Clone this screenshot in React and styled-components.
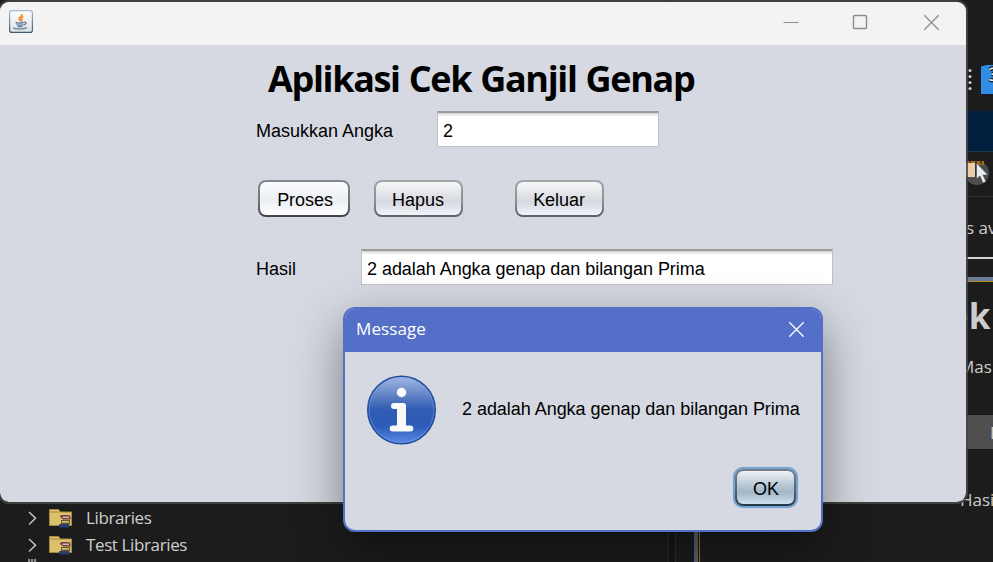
import React from "react";
import styled, { createGlobalStyle } from "styled-components";

const Global = createGlobalStyle`
  * { box-sizing: border-box; }
  html, body { margin: 0; padding: 0; overflow: hidden; background: #1c1c1c; }
`;

const ui = `"Open Sans", "Noto Sans", sans-serif`;
const swing = `"Liberation Sans", Arial, sans-serif`;

const Desktop = styled.div`
  position: relative;
  width: 993px;
  height: 562px;
  overflow: hidden;
  background: #1c1c1c;
`;

const Ide = styled.div`
  display: flex;
  height: 562px;
`;

const Tree = styled.div`
  width: 669px;
  height: 562px;
  padding-top: 505px;
  overflow: hidden;
  border-right: 1px solid #2b2b2b;
`;

const TreeRow = styled.div`
  display: flex;
  align-items: center;
  height: 27px;
  padding-left: 27px;
  color: #cfcfcf;
  font: 17px/27px ${ui};
  letter-spacing: -0.38px;
  white-space: nowrap;
  svg { flex: none; }
  svg + svg { margin: -2px 0 0 10px; }
  span { margin: -2px 0 0 14px; }
`;

const Cut = styled.div`
  margin-left: 28px;
  width: 9px;
  height: 3px;
  background: repeating-linear-gradient(90deg, #8a8a8a 0 2px, #333 2px 3px);
`;

const Gutter = styled.div`
  width: 25px;
  border-left: 6px solid #171717;
  box-shadow: inset 1px 0 #303030;
`;

const Divider = styled.div`
  width: 6px;
  margin-top: 20px;
  background: linear-gradient(90deg, #566476 4px, #1c1c1c 4px 5px, #a87216 5px);
`;

const Editor = styled.div`
  flex: 1;
  display: flex;
  flex-direction: column;
  overflow: hidden;
`;

const Band = styled.div`
  flex: none;
  display: flex;
  align-items: center;
  height: ${(p) => p.$h}px;
  padding-left: ${(p) => p.$pad || 0}px;
  background: ${(p) => p.$bg || "transparent"};
  color: #cdcdcd;
  font: ${(p) => p.$font || "17px/1"} ${ui};
  white-space: nowrap;
  svg { flex: none; }
`;

const Frame = styled.section`
  position: absolute;
  left: -2px;
  top: 0;
  width: 970px;
  height: 504px;
  border: 2px solid rgba(70, 69, 70, 0.85);
  border-radius: 11px;
  background: #d6d9e1 padding-box;
  overflow: hidden;
`;

const TitleBar = styled.header`
  display: flex;
  align-items: flex-start;
  justify-content: space-between;
  height: 43px;
  padding: 8px 26px 0 9px;
  background: #f3f3f3;
`;

const Controls = styled.div`
  display: flex;
  gap: 53px;
  padding-top: 2px;
  svg + svg + svg { margin-left: 2px; }
`;

const Heading = styled.h1`
  margin: 12px 0 0 268px;
  height: 44px;
  font: 700 36px/44px ${ui};
  letter-spacing: -1.35px;
  word-spacing: 1px;
  color: #000;
  white-space: nowrap;
`;

const FormRow = styled.div`
  display: flex;
  align-items: center;
  height: 36px;
  margin-top: ${(p) => p.$top}px;
  padding-left: 256px;
`;

const Label = styled.label`
  width: ${(p) => p.$w}px;
  padding-top: 3px;
  font: 18px/20px ${swing};
  color: #000;
  white-space: nowrap;
`;

const Field = styled.div`
  width: ${(p) => p.$w}px;
  height: 36px;
  padding: 8px 5px 0;
  border: 1px solid #c0c2c5;
  border-top: 2px solid #9c9d9f;
  background: linear-gradient(#d0d1d3, #eeeeee 2px, #fff 4px);
  font: 18px/20px ${swing};
  letter-spacing: -0.04px;
  color: #000;
  white-space: nowrap;
`;

const Button = styled.button`
  display: block;
  width: ${(p) => p.$w}px;
  height: 37px;
  margin: 0 ${(p) => p.$gap || 0}px 0 0;
  padding: 3px 1px 0 0;
  border: 2px solid transparent;
  border-radius: 8px;
  background: ${(p) => p.$lit
    ? "linear-gradient(#fbfcfe, #eceef2 55%, #ffffff) padding-box, linear-gradient(#85888f, #6f727a 60%, #3e414b) border-box"
    : "linear-gradient(#f6f7f8, #d7d9df 58%, #d9dce3 65%, #f2f4fa) padding-box, linear-gradient(#a2a4a8, #8b8e93 60%, #5c5f67) border-box"};
  font: 18px/20px ${swing};
  letter-spacing: -0.05px;
  color: #000;
`;

const PrimaryButton = styled(Button)`
  padding: 3px 0 0 2px;
`;

const Dialog = styled.section`
  position: absolute;
  left: 343px;
  top: 307px;
  width: 480px;
  height: 225px;
  border: 2px solid #546fc8;
  border-radius: 12px;
  background: #d6d9e1;
  box-shadow: 0 18px 50px rgba(0, 0, 0, 0.44);
  overflow: hidden;
`;

const DialogTitle = styled.header`
  display: flex;
  align-items: center;
  justify-content: space-between;
  height: 43px;
  padding: 0 16px 3px 11px;
  background: #546fc8;
  color: #fff;
  font: 17px/24px ${ui};
  letter-spacing: 0.1px;
`;

const DialogBody = styled.div`
  display: flex;
  align-items: center;
  gap: 25px;
  height: 114px;
  padding-left: 21px;
  font: 18px/20px ${swing};
  letter-spacing: -0.04px;
  color: #000;
  white-space: nowrap;
  svg { margin-top: 1px; }
`;

const Ok = styled.button`
  display: block;
  width: 61px;
  height: 37px;
  margin: 3px 0 0 390px;
  padding: 3px 0 0 1px;
  border: 2px solid transparent;
  border-radius: 8px;
  background:
    linear-gradient(#eef2f6, #bccbd8 40%, #a3b8ca 62%, #a9bfd2 72%, #cfe0ef) padding-box,
    linear-gradient(#747f8c, #566472 60%, #263848) border-box;
  box-shadow: 0 0 0 2px #73a4d1, 0 0 1px 2px #9dbddb;
  font: 18px/20px ${swing};
  color: #000;
`;

const JavaIcon = () => (
  <svg width="24" height="23" viewBox="0 0 24 23" fill="none">
    <defs>
      <linearGradient id="jb" x1="0" y1="0" x2="0" y2="1">
        <stop offset="0" stopColor="#a3bdd2" />
        <stop offset="1" stopColor="#3c5b73" />
      </linearGradient>
      <linearGradient id="jf" x1="0" y1="0" x2="0" y2="1">
        <stop offset="0" stopColor="#ffffff" />
        <stop offset="1" stopColor="#dedfe0" />
      </linearGradient>
    </defs>
    <rect x=".6" y=".6" width="22.8" height="21.8" rx="2.2" fill="url(#jf)" stroke="url(#jb)" strokeWidth="1.2" />
    <path d="M13.2 4c.4 2.300-3.800 2.900-3 5 .3.900 1.500 1.300 1.600 2.700M14.400 6.700c-2 .8-2.700 1.700-1.600 3.100.4.600.1 1-.3 1.500" stroke="#ee8d31" strokeWidth="1.700" />
    <path d="M6.500 12.300c2 .9 6 .8 8.300 0M7.500 14.500c1.800.8 5 .8 6.700 0M8.500 16.300c1.500.5 3.500.5 5 0M15 12.300c3-.8 2.500 2-.5 3M4.800 17.500c-1 1.900 10.500 1.900 13 0" stroke="#5d7f9c" strokeWidth="1.300" />
  </svg>
);

const MinIcon = () => (
  <svg width="16" height="20"><path d="M.5 10.500h15" stroke="#8d8d8d" /></svg>
);
const MaxIcon = () => (
  <svg width="16" height="20"><rect x="1.500" y="3.500" width="13" height="13" rx="1" fill="none" stroke="#8d8d8d" strokeWidth="1.400" /></svg>
);
const CloseIcon = ({ color }) => (
  <svg width="17" height="20"><path d="M1.300 3.300l14.400 14.400M15.700 3.300L1.300 17.700" stroke={color} strokeWidth="1.300" /></svg>
);

const Chevron = () => (
  <svg width="12" height="16" fill="none"><path d="M2 1l6.500 6.200L2 13.500" stroke="#c4c4c4" strokeWidth="1.500" /></svg>
);

const Folder = () => (
  <svg width="23" height="20" viewBox="0 0 23 20">
    <path d="M.5 17.500V1.500h9l2 2.500h11v13.500z" fill="#dcc16d" stroke="#a58a3c" />
    <path d="M1 4h10" stroke="#a58a3c" />
    <path d="M11 9q0-2 2-2h6q2.500 0 2.500 2v2.500H14" fill="#733e41" />
    <rect x="13.500" y="8.500" width="6.500" height="1.600" fill="#c9b8b1" />
    <path d="M12 12h9v4h-9z" fill="#6a5927" />
    <rect x="13" y="13" width="7" height="1.600" fill="#d2c285" />
    <rect x="10" y="16" width="10.500" height="3.500" rx="1" fill="#2b3c70" />
  </svg>
);

const InfoIcon = () => (
  <svg width="71" height="70" viewBox="0 0 71 70">
    <defs>
      <linearGradient id="info" x1="0" y1="0" x2="0" y2="1">
        <stop offset="0" stopColor="#a2b9e3" />
        <stop offset=".42" stopColor="#4269b9" />
        <stop offset=".5" stopColor="#2f5bb3" />
        <stop offset=".74" stopColor="#2e5cb8" />
        <stop offset="1" stopColor="#5b8ae8" />
      </linearGradient>
    </defs>
    <circle cx="35.500" cy="35" r="33.800" fill="url(#info)" stroke="#214b9c" strokeWidth="1.400" />
    <circle cx="35.500" cy="35" r="32.300" fill="none" stroke="#7fa0dd" strokeOpacity=".5" />
    <circle cx="35.500" cy="17.500" r="4.700" fill="#fafafa" />
    <path d="M28 28h9.500q2.500 0 2.500 2.500V50.500h4.300a3 3 0 010 6H26.700a3 3 0 010-6H31V34h-3a3 3 0 010-6z" fill="#fafafa" />
  </svg>
);

const Dots = () => (
  <svg width="4" height="22" fill="#d0d0d0">
    {[1, 7, 13, 19].map((y) => <circle key={y} cx="2" cy={y + 0.5} r="1.500" />)}
  </svg>
);

const BlueFile = () => (
  <svg width="16" height="30" viewBox="0 0 16 30">
    <path d="M0 1.500L6 0h10v29H0z" fill="#2f8ee4" />
    <path d="M8.500 4.500q5-3 6 1.500 0 3-4 3 5 0 4 4.500-2 3-6 1" fill="none" stroke="#1c2733" strokeWidth="4.500" />
    <path d="M8.500 4.500q5-3 6 1.500 0 3-4 3 5 0 4 4.500-2 3-6 1" fill="none" stroke="#e6ebef" strokeWidth="1.600" />
  </svg>
);

const Pointer = () => (
  <svg width="30" height="28" viewBox="0 0 30 28">
    <circle cx="14" cy="13" r="12" fill="#4d4d4d" />
    <path d="M5 1h16v4H5z" fill="#a66a10" />
    <path d="M7 1v3M13 1v3M18 1v3" stroke="#333" strokeWidth="1.500" />
    <rect x="2" y="3" width="10" height="14" fill="#eccba5" />
    <path d="M12 4h3v13h-3z" fill="#273a4a" />
    <path d="M13.500 3v16l3.500-3 3 7 3-1.500-3-6.500h5z" fill="#e9edf0" stroke="#3c4650" strokeWidth=".6" />
  </svg>
);

const RESULT = "2 adalah Angka genap dan bilangan Prima";

export default function App() {
  return (
    <Desktop>
      <Global />
      <Ide>
        <Tree>
          <TreeRow><Chevron /><Folder /><span>Libraries</span></TreeRow>
          <TreeRow><Chevron /><Folder /><span>Test Libraries</span></TreeRow>
          <Cut />
        </Tree>
        <Gutter />
        <Divider />
        <Editor>
          <Band $h={55} />
          <Band $h={50} $pad={268}>
            <Band $h={60} $pad={0}><Dots /></Band>
            <Band $h={50} $pad={9}><BlueFile /></Band>
          </Band>
          <Band $h={6} />
          <Band $h={40} $bg="#001e3d" />
          <Band $h={1} $bg="#25394c" />
          <Band $h={44} $pad={263}><Pointer /></Band>
          <Band $h={1} $bg="#333" />
          <Band $h={60} $pad={266}>s av</Band>
          <Band $h={2} $bg="#d6d2d6" />
          <Band $h={18} />
          <Band $h={4} $bg="#697d94" />
          <Band $h={1} $bg="#c08a25" />
          <Band $h={67} $pad={248} $font="700 35px/1">ek</Band>
          <Band $h={1} $bg="#181818" />
          <Band $h={32} $pad={259}>Mas</Band>
          <Band $h={33} />
          <Band $h={34} $bg="#4f4f4f" $pad={290}>P</Band>
          <Band $h={34} />
          <Band $h={32} $pad={260}>Hasi</Band>
        </Editor>
      </Ide>

      <Frame>
        <TitleBar>
          <JavaIcon />
          <Controls><MinIcon /><MaxIcon /><CloseIcon color="#8d8d8d" /></Controls>
        </TitleBar>
        <Heading>Aplikasi Cek Ganjil Genap</Heading>
        <FormRow $top={10}>
          <Label $w={181}>Masukkan Angka</Label>
          <Field $w={222}>2</Field>
        </FormRow>
        <FormRow $top={33}>
          <Label $w={2} />
          <PrimaryButton $w={92} $gap={24} $lit>Proses</PrimaryButton>
          <Button $w={89} $gap={52}>Hapus</Button>
          <Button $w={89}>Keluar</Button>
        </FormRow>
        <FormRow $top={33}>
          <Label $w={105}>Hasil</Label>
          <Field $w={472}>{RESULT}</Field>
        </FormRow>
      </Frame>

      <Dialog>
        <DialogTitle>Message<CloseIcon color="#fff" /></DialogTitle>
        <DialogBody><InfoIcon />{RESULT}</DialogBody>
        <Ok>OK</Ok>
      </Dialog>
    </Desktop>
  );
}
